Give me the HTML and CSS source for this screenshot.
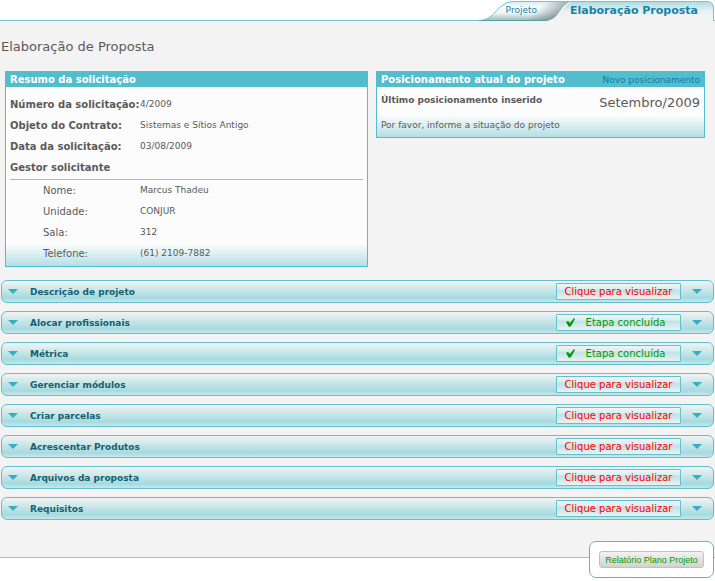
FILE: index.html
```html
<!DOCTYPE html>
<html lang="pt-BR">
<head>
<meta charset="utf-8">
<title>Elaboração de Proposta</title>
<link rel="stylesheet" href="styles.css">
</head>
<body>
<header class="topbar">
  <nav class="tabs">
    <svg class="tabs-shape" viewBox="0 0 240 21" aria-hidden="true">
      <defs>
        <linearGradient id="idle" x1="0" y1="0" x2="0" y2="1">
          <stop offset="0" stop-color="#d5eff2"/><stop offset=".3" stop-color="#f8fcfc"/><stop offset=".6" stop-color="#f0f6f6"/><stop offset="1" stop-color="#9bb2b3"/>
        </linearGradient>
        <linearGradient id="edge" x1="0" y1="0" x2="1" y2=".25">
          <stop offset=".68" stop-color="#7b9092" stop-opacity="0"/><stop offset=".95" stop-color="#6f8587" stop-opacity=".7"/>
        </linearGradient>
        <linearGradient id="active" x1="0" y1="0" x2="0" y2="1">
          <stop offset="0" stop-color="#a9dce1"/><stop offset=".5" stop-color="#e9f2f3"/><stop offset=".8" stop-color="#f3f3f3"/>
        </linearGradient>
      </defs>
      <path d="M3 21C15 20 18 14 25 7Q31 1.500 38 1.500H97C84 4 86 20 70 21Z" fill="url(#idle)"/>
      <path d="M3 21C15 20 18 14 25 7Q31 1.500 38 1.500H97C84 4 86 20 70 21Z" fill="url(#edge)"/>
      <path d="M70 21C86 20 86 4 99 1.500H232Q238.500 1.500 238.500 8V21Z" fill="url(#active)"/>
      <path d="M0 20.500H4C15 20 18 14 25 7Q31 1.500 38 1.500H232Q238.500 1.500 238.500 8V20.500H240" fill="none" stroke="#74c5cd"/>
      <path d="M4 20.500H72" fill="none" stroke="#4fa5ad"/>
    </svg>
    <a class="tab" href="#projeto">Projeto</a>
    <a class="tab tab-active" href="#proposta" aria-current="page">Elaboração Proposta</a>
  </nav>
</header>

<main class="content">
  <h1 class="title">Elaboração de Proposta</h1>
  <div class="panels">
    <section class="panel">
      <header class="panel-head"><h2 class="panel-title">Resumo da solicitação</h2></header>
      <div class="summary">
        <dl class="fields">
          <dt>Número da solicitação:</dt><dd>4/2009</dd>
          <dt>Objeto do Contrato:</dt><dd>Sistemas e Sítios Antigo</dd>
          <dt>Data da solicitação:</dt><dd>03/08/2009</dd>
        </dl>
        <h3 class="subhead">Gestor solicitante</h3>
        <dl class="fields fields-nested">
          <dt>Nome:</dt><dd>Marcus Thadeu</dd>
          <dt>Unidade:</dt><dd>CONJUR</dd>
          <dt>Sala:</dt><dd>312</dd>
          <dt>Telefone:</dt><dd>(61) 2109-7882</dd>
        </dl>
      </div>
    </section>
    <section class="panel">
      <header class="panel-head">
        <h2 class="panel-title">Posicionamento atual do projeto</h2>
        <a class="panel-link" href="#novo">Novo posicionamento</a>
      </header>
      <div class="position">
        <div class="position-row"><strong>Último posicionamento inserido</strong><span class="month">Setembro/2009</span></div>
        <p class="hint">Por favor, informe a situação do projeto</p>
      </div>
    </section>
  </div>

  <div class="steps">
    <section class="step"><button class="arrow" aria-label="Abrir"></button><h2 class="step-title">Descrição de projeto</h2><button class="status">Clique para visualizar</button><button class="arrow" aria-label="Expandir"></button></section>
    <section class="step"><button class="arrow" aria-label="Abrir"></button><h2 class="step-title">Alocar profissionais</h2><button class="status done"><svg class="check" viewBox="0 0 9 9" aria-hidden="true"><path d="M0 4L2 3L4 5L8 0L9 1L5 8L3 9Z"/></svg>Etapa concluída</button><button class="arrow" aria-label="Expandir"></button></section>
    <section class="step"><button class="arrow" aria-label="Abrir"></button><h2 class="step-title">Métrica</h2><button class="status done"><svg class="check" viewBox="0 0 9 9" aria-hidden="true"><path d="M0 4L2 3L4 5L8 0L9 1L5 8L3 9Z"/></svg>Etapa concluída</button><button class="arrow" aria-label="Expandir"></button></section>
    <section class="step"><button class="arrow" aria-label="Abrir"></button><h2 class="step-title">Gerenciar módulos</h2><button class="status">Clique para visualizar</button><button class="arrow" aria-label="Expandir"></button></section>
    <section class="step"><button class="arrow" aria-label="Abrir"></button><h2 class="step-title">Criar parcelas</h2><button class="status">Clique para visualizar</button><button class="arrow" aria-label="Expandir"></button></section>
    <section class="step"><button class="arrow" aria-label="Abrir"></button><h2 class="step-title">Acrescentar Produtos</h2><button class="status">Clique para visualizar</button><button class="arrow" aria-label="Expandir"></button></section>
    <section class="step"><button class="arrow" aria-label="Abrir"></button><h2 class="step-title">Arquivos da proposta</h2><button class="status">Clique para visualizar</button><button class="arrow" aria-label="Expandir"></button></section>
    <section class="step"><button class="arrow" aria-label="Abrir"></button><h2 class="step-title">Requisitos</h2><button class="status">Clique para visualizar</button><button class="arrow" aria-label="Expandir"></button></section>
  </div>
</main>

<footer class="footer">
  <div class="actions"><button class="report">Relatório Plano Projeto</button></div>
</footer>
</body>
</html>
```
FILE: styles.css
```css
* { box-sizing: border-box; }
body {
  margin: 0;
  background: #fff;
  color: #5a5a5a;
  font-family: Verdana, "DejaVu Sans", sans-serif;
  font-size: 9px;
}
h1, h2, h3, p, dl, dd { margin: 0; }
button { font-family: inherit; padding: 0; border: 0; background: none; cursor: pointer; }
a { text-decoration: none; }

.topbar {
  display: flex;
  justify-content: flex-end;
  background: linear-gradient(#74c5cd, #74c5cd) left bottom / 100% 1px no-repeat;
}
.tabs {
  position: relative;
  display: flex;
  align-items: center;
  justify-content: flex-end;
  gap: 33px;
  width: 240px;
  height: 21px;
  padding-right: 17px;
}
.tabs-shape { position: absolute; inset: 0; width: 100%; height: 100%; }
.tab { position: relative; color: #1583a8; font-size: 9px; line-height: 21px; }
.tab-active { font-size: 11px; font-weight: bold; }

.content { background: #f3f3f3; padding-bottom: 37px; }
.title {
  padding: 16px 1px 14px;
  font-size: 13px;
  line-height: 20px;
  font-weight: normal;
}
.panels {
  display: grid;
  grid-template-columns: 363fr 329fr;
  align-items: start;
  gap: 8px;
  padding: 0 10px 0 5px;
}
.panel {
  border: 1px solid #54bdcd;
  background: linear-gradient(to top, #b4dfe4, #fcfcfc 22px);
}
.panel-head {
  display: flex;
  align-items: center;
  justify-content: space-between;
  height: 15px;
  padding: 0 4px;
  background: #54bdcd;
}
.panel-title { color: #fff; font-size: 10px; line-height: 15px; }
.panel-link { color: #087fa8; font-size: 9px; }
.summary { padding: 7px 4px 2px; }
.fields { display: grid; grid-template-columns: 130px 1fr; line-height: 21px; }
.fields dt { font-size: 10px; font-weight: bold; white-space: nowrap; }
.subhead { border-bottom: 1px solid #7fcdd7; font-size: 10px; line-height: 22px; }
.fields-nested dt { padding-left: 33px; font-weight: normal; }
.position { padding: 5px 4px; }
.position-row { display: flex; justify-content: space-between; line-height: 20px; }
.position-row strong { line-height: 16px; }
.month { font-size: 13px; line-height: 22px; }
.hint { padding: 4px 0 0; line-height: 14px; }

.steps { display: flex; flex-direction: column; gap: 8px; padding: 13px 1px 0; }
.step {
  display: flex;
  align-items: center;
  height: 23px;
  padding: 0 6px;
  border: 1px solid #63c1cd;
  border-radius: 6px;
  background: linear-gradient(#f1f4f3, #a6dadf 80%, #b4dfe4 88%, #c4e8ec);
}
.arrow { display: flex; justify-content: center; width: 10px; height: 10px; align-items: center; }
.arrow::before {
  content: "";
  border: 5px solid transparent;
  border-top-color: #36afc0;
  border-bottom: 0;
}
.arrow:last-child { margin: 0 5px 0 11px; }
.step-title { flex: 1; padding-left: 12px; color: #14616f; font-size: 9px; }
.status {
  position: relative;
  width: 125px;
  height: 17px;
  border: 1px solid #63c1cd;
  border-radius: 1px;
  background: linear-gradient(#eef5f6, #dceef0 30%, #c0e2e6 45%, #e9f2f3);
  color: #f00;
  font-size: 10px;
  line-height: 15px;
}
.done { padding-left: 14px; color: #090; }
.check { position: absolute; left: 9px; top: 3px; width: 9px; height: 9px; fill: #090; }

.footer {
  display: flex;
  justify-content: flex-end;
  padding-right: 1px;
  background: linear-gradient(#8ccdd2, #8ccdd2) left top / 100% 1px no-repeat;
}
.actions {
  margin-top: -16px;
  padding: 9px;
  border: 1px solid #63b5bb;
  border-radius: 7px;
  background: #fff;
}
.report {
  display: block;
  width: 105px;
  height: 17px;
  border: 1px solid #c4c0be;
  border-radius: 3px;
  background: linear-gradient(#f4f2f1, #d5d1cf);
  color: #090;
  font-family: "Liberation Sans", Arial, sans-serif;
  font-size: 9px;
}
```
